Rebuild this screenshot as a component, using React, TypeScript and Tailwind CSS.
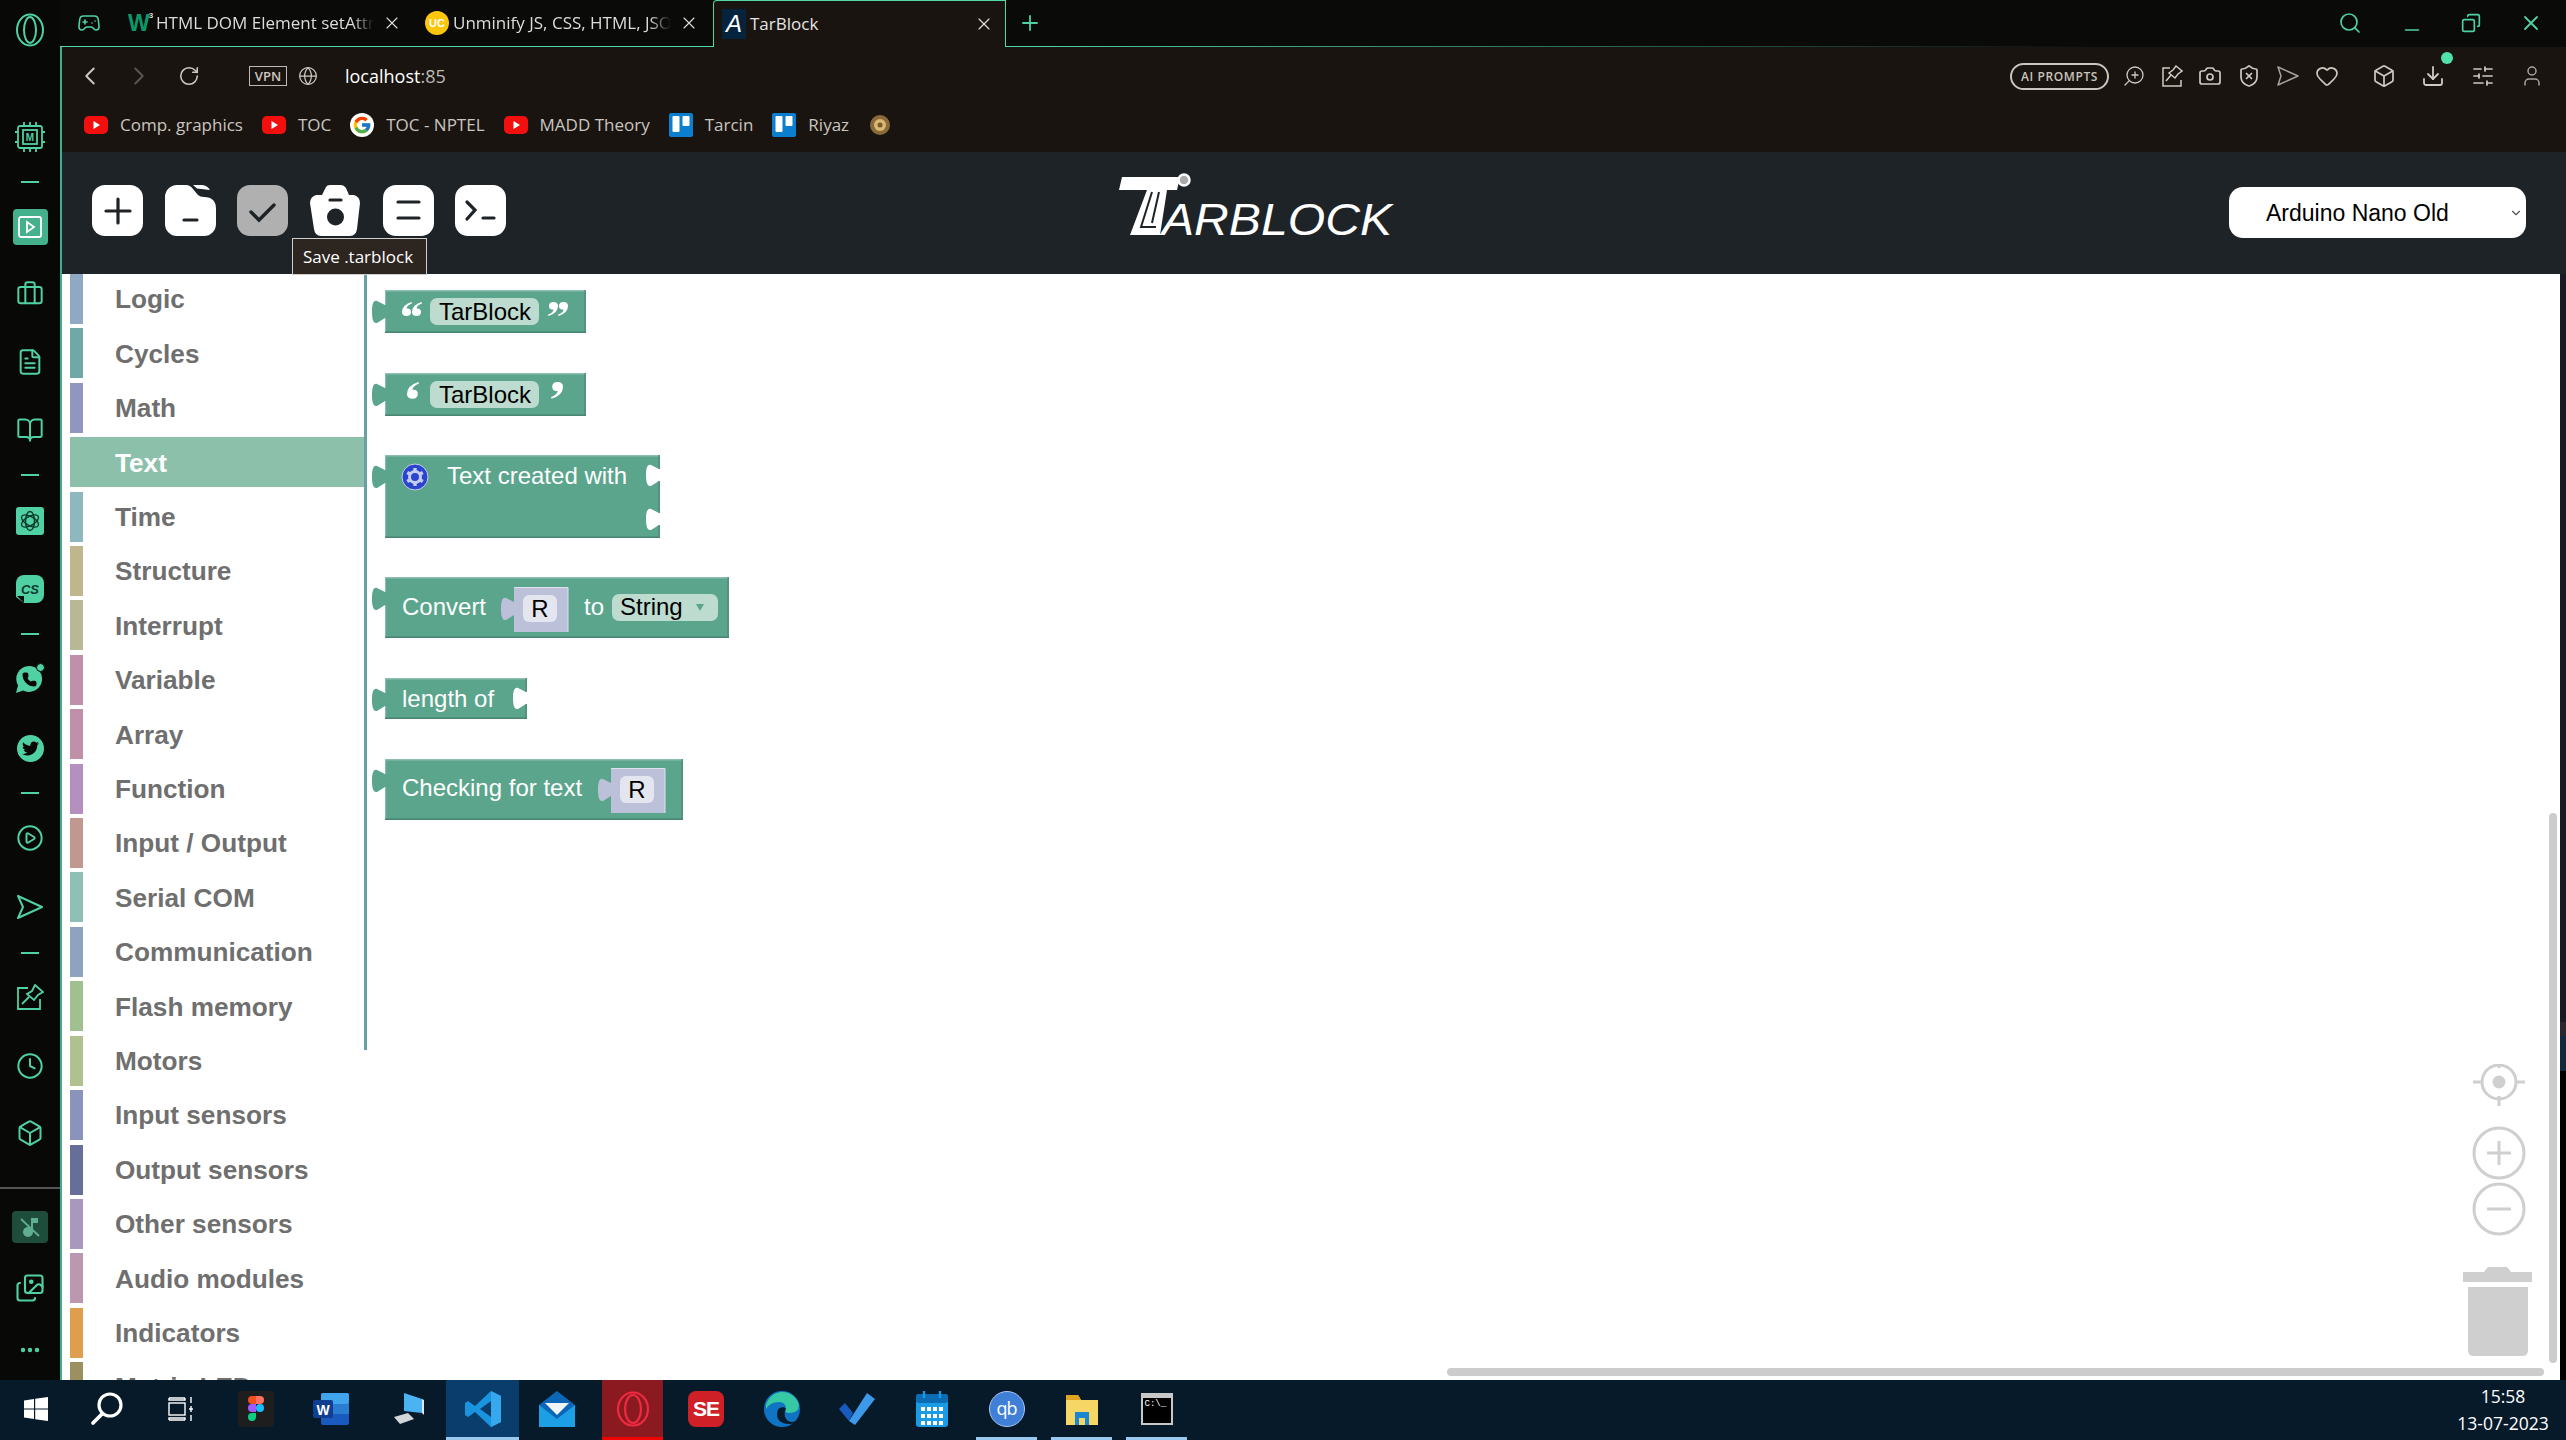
import React from "react";
import {
  Gamepad2, X, Plus, ChevronLeft, ChevronRight, RotateCw, Globe, Search, Copy, Minus,
  Camera, ShieldX, Heart, Box, Download, SlidersHorizontal, User, ZoomIn, Briefcase,
  FileText, BookOpen, CirclePlay, Clock, Images, Ellipsis, ChevronDown, Phone,
} from "lucide-react";
import { FaTwitter } from "react-icons/fa";
import { FcGoogle } from "react-icons/fc";

const categories: [string, string][] = [
  ["Logic", "#8fa8c4"], ["Cycles", "#70a8a8"], ["Math", "#8f97c0"], ["Text", "#8cc0ab"],
  ["Time", "#8eb8c0"], ["Structure", "#bfb68c"], ["Interrupt", "#b8b894"], ["Variable", "#c08fa8"],
  ["Array", "#c08fa8"], ["Function", "#b48fc0"], ["Input / Output", "#c09890"], ["Serial COM", "#8fc0b5"],
  ["Communication", "#8fa3c0"], ["Flash memory", "#a0c08f"], ["Motors", "#b0c08f"], ["Input sensors", "#8a93bb"],
  ["Output sensors", "#656f99"], ["Other sensors", "#a898bd"], ["Audio modules", "#bb98b0"], ["Indicators", "#df9e4d"],
  ["Matrix LED", "#9c9060"],
];

function Yt() {
  return (
    <svg width="24" height="18" viewBox="0 0 24 18" className="shrink-0">
      <rect width="24" height="18" rx="5" fill="#f40f0f" />
      <path d="M9.5 5 L16 9 L9.5 13 Z" fill="#fff" />
    </svg>
  );
}
function Trello() {
  return (
    <svg width="24" height="24" viewBox="0 0 24 24" className="shrink-0">
      <rect width="24" height="24" rx="2" fill="#0a7fd0" />
      <rect x="3.5" y="3" width="7" height="16" rx="1" fill="#fff" />
      <rect x="13.5" y="3" width="7" height="10" rx="1" fill="#fff" />
    </svg>
  );
}
function Mark({ label, children }: { label: string; children: React.ReactNode }) {
  return (
    <div className="flex items-center gap-[12px] mr-[19px]">
      {children}
      <span className="text-[17px] text-[#c9c5c0] whitespace-nowrap">{label}</span>
    </div>
  );
}

function Tab({ icon, label, w }: { icon: React.ReactNode; label: string; w: string }) {
  return (
    <div className={`flex items-center shrink-0 ${w}`}>
      <div className="w-[28px] shrink-0 flex justify-start">{icon}</div>
      <span className="w-[218px] overflow-hidden whitespace-nowrap text-[17px] text-[#dcdcdc] [mask-image:linear-gradient(to_right,black_90%,transparent)]">
        {label}
      </span>
      <X size={20} strokeWidth={1.4} className="ml-[8px] text-[#d8d8d8] shrink-0" />
    </div>
  );
}

function Rail({ children, className = "" }: { children: React.ReactNode; className?: string }) {
  return <div className={`h-[36px] w-full flex items-center justify-center shrink-0 ${className}`}>{children}</div>;
}
function Dash() {
  return <div className="w-[18px] h-[2px] bg-[#4fd1a3]" />;
}

function Sidebar() {
  const s = 28;
  const w = 1.7;
  return (
    <aside className="w-[60px] shrink-0 bg-[#080807] flex flex-col pt-[12px] text-[#4fd1a3]">
      <Rail>
        <svg width="30" height="34" viewBox="0 0 30 34" fill="none" stroke="#4fd1a3" strokeWidth="2">
          <ellipse cx="15" cy="17" rx="13" ry="15.5" />
          <ellipse cx="15" cy="17" rx="6" ry="13" />
        </svg>
      </Rail>
      <Rail className="mt-[71px]">
        <svg width="30" height="32" viewBox="0 0 30 32" fill="none" stroke="#4fd1a3" strokeWidth="1.8">
          <rect x="3" y="5" width="24" height="22" rx="2" />
          <rect x="8" y="9" width="14" height="14" />
          <path d="M9 5V1M15 5V1M21 5V1M9 27v4M15 27v4M21 27v4M3 11H0M3 21H0M27 11h3M27 21h3" />
          <text x="15" y="20" textAnchor="middle" fontSize="10" fontWeight="700" fill="#4fd1a3" stroke="none" fontFamily="Liberation Sans, sans-serif">M</text>
        </svg>
      </Rail>
      <Rail className="mt-[9px]"><Dash /></Rail>
      <Rail className="mt-[9px]">
        <div className="w-[35px] h-[36px] rounded-[4px] bg-[#45b08c] flex items-center justify-center">
          <svg width="26" height="24" viewBox="0 0 26 24" fill="none" stroke="#fff" strokeWidth="1.8">
            <rect x="2" y="2" width="22" height="20" rx="2" />
            <path d="M10 7 L17 12 L10 17 Z" />
          </svg>
        </div>
      </Rail>
      <Rail className="mt-[31px]"><Briefcase size={s} strokeWidth={w} /></Rail>
      <Rail className="mt-[32px]"><FileText size={s} strokeWidth={w} /></Rail>
      <Rail className="mt-[32px]"><BookOpen size={s} strokeWidth={w} /></Rail>
      <Rail className="mt-[9px]"><Dash /></Rail>
      <Rail className="mt-[10px]">
        <div className="w-[28px] h-[28px] rounded-[3px] bg-[#4fd1a3] flex items-center justify-center">
          <svg width="22" height="22" viewBox="0 0 22 22" fill="none" stroke="#0b3a2c" strokeWidth="1.4">
            <ellipse cx="11" cy="11" rx="4.5" ry="9.5" />
            <ellipse cx="11" cy="11" rx="4.5" ry="9.5" transform="rotate(60 11 11)" />
            <ellipse cx="11" cy="11" rx="4.5" ry="9.5" transform="rotate(120 11 11)" />
          </svg>
        </div>
      </Rail>
      <Rail className="mt-[32px]">
        <svg width="28" height="28" viewBox="0 0 28 28">
          <path d="M8 0H20a8 8 0 0 1 8 8V20a8 8 0 0 1-8 8H8L0 22V8a8 8 0 0 1 8-8Z" fill="#4fd1a3" />
          <path d="M1 21 L8 21 L8 28 Z" fill="#080807" />
          <text x="14" y="19" textAnchor="middle" fontSize="13" fontWeight="700" fontStyle="italic" fill="#0b3a2c" fontFamily="Liberation Sans, sans-serif">CS</text>
        </svg>
      </Rail>
      <Rail className="mt-[9px]"><Dash /></Rail>
      <Rail className="mt-[9px]">
        <div className="relative w-[30px] h-[30px]">
          <svg width="28" height="30" viewBox="0 0 28 30">
            <path d="M14 2A13 13 0 1 1 8 26.5L1 29L3 21.5A13 13 0 0 1 14 2Z" fill="#4fd1a3" />
          </svg>
          <Phone size={15} strokeWidth={2.4} className="absolute left-[7px] top-[8px] text-[#080807] fill-[#080807]" />
          <span className="absolute right-0 -top-[1px] w-[9px] h-[9px] rounded-full bg-[#4fd1a3] border border-[#080807]" />
        </div>
      </Rail>
      <Rail className="mt-[33px]">
        <div className="w-[27px] h-[27px] rounded-full bg-[#4fd1a3] flex items-center justify-center text-[#080807]">
          <FaTwitter size={17} />
        </div>
      </Rail>
      <Rail className="mt-[9px]"><Dash /></Rail>
      <Rail className="mt-[9px]"><CirclePlay size={s} strokeWidth={w} /></Rail>
      <Rail className="mt-[33px]">
        <svg width="28" height="26" viewBox="0 0 28 26" fill="none" stroke="#4fd1a3" strokeWidth="2" strokeLinejoin="round">
          <path d="M2 2 L26 13 L2 24 L7 13 Z" />
        </svg>
      </Rail>
      <Rail className="mt-[10px]"><Dash /></Rail>
      <Rail className="mt-[8px]">
        <svg width="28" height="26" viewBox="0 0 28 26" fill="none" stroke="#4fd1a3" strokeWidth="1.8">
          <path d="M12 4H2V25H24V15" />
          <path d="M19 1 L27 8 L22 11 L18 16 L11 10 L16 7 Z M13 13 L6 20" />
        </svg>
      </Rail>
      <Rail className="mt-[33px]"><Clock size={s} strokeWidth={w} /></Rail>
      <Rail className="mt-[31px]"><Box size={s} strokeWidth={w} /></Rail>
      <div className="mt-[36px] h-[2px] w-full bg-[#555] shrink-0" />
      <Rail className="mt-[20px]">
        <div className="w-[36px] h-[32px] rounded-[4px] bg-[#1f4d3c] flex items-center justify-center">
          <svg width="22" height="22" viewBox="0 0 22 22" fill="#5fae92">
            <circle cx="9" cy="16" r="5" />
            <path d="M12 2H19V7H14V16H12Z" />
            <path d="M2 3L20 20" stroke="#5fae92" strokeWidth="1.8" />
          </svg>
        </div>
      </Rail>
      <Rail className="mt-[25px]"><Images size={30} strokeWidth={w} /></Rail>
      <Rail className="mt-[26px]"><Ellipsis size={24} strokeWidth={2.4} /></Rail>
    </aside>
  );
}

function TabStrip() {
  return (
    <div className="h-[47px] flex shrink-0 bg-[#0a0a08]">
      <div className="w-[653px] shrink-0 border-b border-[#4fd8a8] flex items-center">
        <Gamepad2 size={24} strokeWidth={1.6} className="ml-[17px] mr-[27px] text-[#4fd1a3]" />
        <Tab
          w="w-[297px]"
          label="HTML DOM Element setAttribute"
          icon={
            <span className="flex items-start font-bold leading-none font-['Liberation_Sans']">
              <span className="text-[23px] text-[#0a9a6a] tracking-[-1px]">W</span>
              <span className="text-[8px] text-[#ddd]">3</span>
            </span>
          }
        />
        <Tab
          w="w-[274px]"
          label="Unminify JS, CSS, HTML, JSON"
          icon={
            <span className="w-[24px] h-[24px] rounded-full bg-[#fcc60c] flex items-center justify-center text-[11px] font-bold text-white font-['Liberation_Sans']">
              UC
            </span>
          }
        />
      </div>
      <div className="w-[293px] shrink-0 bg-[#19140f] border border-b-0 border-[#4fd8a8] flex items-center pl-[8px] rounded-tl-[4px]">
        <span className="w-[24px] h-[30px] bg-[#04233d] text-white italic text-[24px] leading-[30px] text-center font-['Liberation_Sans'] mr-[4px]">A</span>
        <span className="text-[17px] text-[#e5e5e5]">TarBlock</span>
        <X size={20} strokeWidth={1.4} className="ml-auto mr-[11px] text-[#e0e0e0]" />
      </div>
      <div className="flex-1 flex flex-col min-w-0">
        <div className="flex-1 flex items-center text-[#4fd1a3] pr-[23px]">
          <Plus size={24} strokeWidth={1.8} className="ml-[12px]" />
          <Search size={24} strokeWidth={1.7} className="ml-auto mr-[39px]" />
          <Minus size={22} strokeWidth={1.8} className="mr-[38px] mt-[14px]" />
          <Copy size={20} strokeWidth={2} className="mr-[38px] -scale-x-100" />
          <X size={24} strokeWidth={1.8} />
        </div>
        <div className="h-px bg-linear-to-r from-[#4fd8a8] to-transparent to-70%" />
      </div>
    </div>
  );
}

function AddressBar() {
  const gc = "text-[#cfc9c2]";
  return (
    <div className="h-[105px] shrink-0 bg-[#19140f] flex flex-col">
      <div className="h-[58px] flex items-center text-[#cfc9c2]">
        <ChevronLeft size={30} strokeWidth={1.5} className="ml-[13px]" />
        <ChevronRight size={30} strokeWidth={1.5} className="ml-[19px] text-[#5b5651]" />
        <RotateCw size={22} strokeWidth={1.7} className="ml-[24px]" />
        <span className="ml-[49px] w-[38px] h-[20px] border border-[#bbb] text-[13px] leading-[18px] text-center font-semibold">VPN</span>
        <Globe size={20} strokeWidth={1.5} className="ml-[11px]" />
        <span className="ml-[27px] text-[18px] text-white">
          localhost<span className="text-[#bdbab6]">:85</span>
        </span>
        <div className="ml-auto flex items-center mr-[22px]">
          <span className="w-[99px] h-[27px] rounded-full border-2 border-[#c9c4bd] text-[12px] font-semibold tracking-[0.6px] leading-[23px] text-center text-[#c9c4bd] mr-[13px]">
            AI PROMPTS
          </span>
          <ZoomIn size={24} strokeWidth={1.3} className={`${gc} -scale-x-100`} />
          <svg width="22" height="22" viewBox="0 0 22 22" fill="none" stroke="#cfc9c2" strokeWidth="1.5" className="ml-[15px]">
            <path d="M9 3H2V21H20V15" />
            <path d="M15 1 L21 6 L17 9 L14 13 L8 8 L12 5 Z M10 10 L5 16" />
          </svg>
          <Camera size={24} strokeWidth={1.7} className={`${gc} ml-[15px]`} />
          <ShieldX size={24} strokeWidth={1.7} className={`${gc} ml-[15px]`} />
          <svg width="22" height="20" viewBox="0 0 22 20" fill="none" stroke="#a8a39d" strokeWidth="1.5" strokeLinejoin="round" className="ml-[16px]">
            <path d="M1 1 L21 10 L1 19 L4 10 Z" />
          </svg>
          <Heart size={24} strokeWidth={1.7} className={`${gc} ml-[16px]`} />
          <Box size={24} strokeWidth={1.7} className={`${gc} ml-[33px]`} />
          <div className="relative ml-[25px]">
            <Download size={24} strokeWidth={1.8} className={gc} />
            <span className="absolute -top-[12px] -right-[8px] w-[12px] h-[12px] rounded-full bg-[#4fe0ac]" />
          </div>
          <SlidersHorizontal size={24} strokeWidth={1.7} className={`${gc} ml-[26px]`} />
          <User size={24} strokeWidth={1.5} className="text-[#a8a39d] ml-[25px]" />
        </div>
      </div>
      <div className="h-[40px] flex items-center pl-[22px]">
        <Mark label="Comp. graphics"><Yt /></Mark>
        <Mark label="TOC"><Yt /></Mark>
        <Mark label="TOC - NPTEL">
          <span className="w-[24px] h-[24px] rounded-full bg-white flex items-center justify-center shrink-0">
            <FcGoogle size={20} />
          </span>
        </Mark>
        <Mark label="MADD Theory"><Yt /></Mark>
        <Mark label="Tarcin"><Trello /></Mark>
        <Mark label="Riyaz"><Trello /></Mark>
        <svg width="24" height="24" viewBox="0 0 24 24">
          <circle cx="12" cy="12" r="10" fill="#8a6a3a" />
          <circle cx="12" cy="12" r="6" fill="#d9b873" />
          <circle cx="12" cy="12" r="2.5" fill="#7b5a2c" />
        </svg>
      </div>
    </div>
  );
}

function ToolBtn({ children }: { children: React.ReactNode }) {
  return <div className="w-[51px] h-[51px] shrink-0">{children}</div>;
}

function Toolbar() {
  const d = "#1e2327";
  const r = { stroke: d, strokeWidth: 3.2, strokeLinecap: "round" as const, fill: "none" };
  return (
    <div className="h-[122px] shrink-0 bg-[#1e2327] flex items-start pt-[33px] pl-[30px] relative">
      <div className="flex gap-[21.7px]">
        <ToolBtn>
          <svg viewBox="0 0 51 51"><rect width="51" height="51" rx="13" fill="#fff" /><path d="M26 14V38M14 26H38" {...r} /></svg>
        </ToolBtn>
        <ToolBtn>
          <svg viewBox="0 0 51 51">
            <path d="M0 12A12 12 0 0 1 12 0H21Q25 0 28 4L33 10Q35 12 39 12Q51 12 51 24V39A12 12 0 0 1 39 51H12A12 12 0 0 1 0 39Z" fill="#fff" />
            <path d="M28 0H36Q42 0 45 5L32 3.5Z" fill="#fff" />
            <path d="M19 35H32" {...r} />
          </svg>
        </ToolBtn>
        <ToolBtn>
          <svg viewBox="0 0 51 51"><rect width="51" height="51" rx="13" fill="#b0b0b0" /><path d="M14 27L22 35L37 20" {...r} strokeWidth={3.4} /></svg>
        </ToolBtn>
        <ToolBtn>
          <svg viewBox="0 0 51 51">
            <path d="M16 2Q17 0 20 0H31Q34 0 36 3L39 10H44Q50 12 50 18L47 44Q46 51 40 51H11Q5 51 4 44L0 18Q0 12 6 10H12Z" fill="#fff" />
            <path d="M20 15H31" {...r} />
            <circle cx="25.5" cy="32" r="8.5" fill={d} />
          </svg>
        </ToolBtn>
        <ToolBtn>
          <svg viewBox="0 0 51 51"><rect width="51" height="51" rx="13" fill="#fff" /><path d="M15 17H36M15 33H36" {...r} /></svg>
        </ToolBtn>
        <ToolBtn>
          <svg viewBox="0 0 51 51"><rect width="51" height="51" rx="13" fill="#fff" /><path d="M12 17L20 25L12 34M28 33H39" {...r} /></svg>
        </ToolBtn>
      </div>
      <div className="absolute left-[230px] top-[86px] z-20 w-[135px] h-[37px] bg-[#2d2520] border border-[#cfcfcf] text-white text-[17px] leading-[35px] text-center pr-[3px] whitespace-nowrap">
        Save .tarblock
      </div>
      <svg width="290" height="70" viewBox="0 0 290 70" className="ml-[613px] -mt-[9px] shrink-0 overflow-visible">
        <path d="M3 1H61L58 14H48L41 59H11L28 14H0Z" fill="#fff" />
        <path d="M33 16L22 51H37M40 16L33 47" stroke="#1e2327" strokeWidth="2" fill="none" />
        <path d="M58 4H62" stroke="#fff" strokeWidth="3" />
        <circle cx="65" cy="4" r="5.5" fill="#aaa" stroke="#fff" strokeWidth="2.5" />
        <text x="43" y="59" fontFamily="Liberation Sans, sans-serif" fontStyle="italic" fontSize="45" fill="#fff" textLength="230" lengthAdjust="spacingAndGlyphs">ARBLOCK</text>
      </svg>
      <div className="absolute left-[2167px] top-[35px] w-[297px] h-[51px] bg-white rounded-[14px] flex items-center pl-[37px] pt-[1px] font-['Liberation_Sans'] text-[23px] text-black">
        Arduino Nano Old
        <ChevronDown size={14} strokeWidth={2} className="absolute right-[3px] top-[19px] text-[#555]" />
      </div>
    </div>
  );
}

const F = "#5ba58c", HI = "#8cc0ab", LO = "#498470";
const FONT = "Liberation Sans, Arial, sans-serif";

function tabLeft(x: number, t: number) {
  return `L${x} ${t + 28} L${x - 8} ${t + 33} C${x - 12} ${t + 34} ${x - 13} ${t + 28} ${x - 13} ${t + 22} C${x - 13} ${t + 15} ${x - 12} ${t + 10} ${x - 8} ${t + 11} L${x} ${t + 15}`;
}
function notch(r: number, n: number) {
  return `V${n + 5} L${r - 8} ${n + 1} C${r - 12} ${n} ${r - 13} ${n + 5} ${r - 13} ${n + 11} C${r - 13} ${n + 17} ${r - 12} ${n + 23} ${r - 8} ${n + 22} L${r} ${n + 17}`;
}
function Block({ r, t, b, notches = [] }: { r: number; t: number; b: number; notches?: number[] }) {
  const x = 385;
  const d = `M${x} ${t} H${r} ${notches.map((n) => notch(r, n)).join(" ")} V${b} H${x} ${tabLeft(x, t)} Z`;
  const stops = [t, ...notches.flatMap((n) => [n + 5, n + 17]), b];
  const segs: [number, number][] = [];
  for (let i = 0; i < stops.length; i += 2) segs.push([stops[i], stops[i + 1]]);
  return (
    <g>
      <path d={d} fill={F} />
      <path d={`M${x} ${t + 0.8} H${r}`} stroke={HI} strokeWidth="1.6" />
      <path d={`M${x + 0.6} ${t} V${t + 15} M${x + 0.6} ${t + 28} V${b}`} stroke={HI} strokeWidth="1" />
      <path d={`M${x} ${b - 0.8} H${r + 1}`} stroke={LO} strokeWidth="1.6" />
      {segs.map(([a, c]) => (
        <path key={a} d={`M${r + 0.2} ${a} V${c}`} stroke={LO} strokeWidth="1.4" />
      ))}
    </g>
  );
}
function Field({ x, y, w, h, fill = "#bedbd0" }: { x: number; y: number; w: number; h: number; fill?: string }) {
  return <rect x={x} y={y} width={w} height={h} rx="7" fill={fill} />;
}
function Txt({ x, y, fill = "#fff", children }: { x: number; y: number; fill?: string; children: string }) {
  return <text x={x} y={y} fill={fill} fontFamily={FONT} fontSize="24">{children}</text>;
}
function Value({ x, t }: { x: number; t: number }) {
  const b = t + 45;
  return (
    <g>
      <path d={`M${x} ${t} H${x + 54} V${b} H${x} ${tabLeft(x, t)} Z`} fill="#bcc1d9" />
      <path d={`M${x} ${t + 0.5} H${x + 54} V${b}`} fill="none" stroke="#dfe1ee" strokeWidth="1" />
      <rect x={x + 9} y={t + 8} width="34" height="27" rx="6" fill="#e4e6ef" />
      <text x={x + 26} y={t + 30} textAnchor="middle" fontFamily={FONT} fontSize="24" fill="#000">R</text>
    </g>
  );
}
function Quote({ x, y, flip, k = 1 }: { x: number; y: number; flip?: boolean; k?: number }) {
  return (
    <path
      transform={`translate(${x} ${y}) scale(${k}) ${flip ? "rotate(180 5 7)" : ""}`}
      d="M9.5 0 Q0 3 0 10 Q0 14 4.5 14 Q9 14 9 10 Q9 6 4.5 6.5 Q5 3 10 1.5 Z"
      fill="#fff"
    />
  );
}

function Blocks() {
  return (
    <svg width="400" height="560" viewBox="368 274 400 560" className="absolute left-[306px] top-0 z-10">
      <Block r={585} t={290} b={333} />
      <Quote x={402} y={302} /><Quote x={412} y={302} />
      <Field x={430} y={298} w={109} h={27} />
      <Txt x={439} y={320} fill="#000">TarBlock</Txt>
      <Quote x={548} y={302} flip /><Quote x={558} y={302} flip />

      <Block r={585} t={373} b={416} />
      <Quote x={407} y={382} k={1.2} />
      <Field x={430} y={381} w={109} h={27} />
      <Txt x={439} y={403} fill="#000">TarBlock</Txt>
      <Quote x={551} y={382} flip k={1.2} />

      <Block r={659} t={455} b={538} notches={[464, 508]} />
      <circle cx="415" cy="477" r="13" fill="#2a44d0" stroke="#c5cfe0" strokeWidth="1" />
      <g stroke="#c3cdf2" strokeWidth="3.4">
        {[0, 60, 120].map((a) => (
          <path key={a} d="M415 468 V486" transform={`rotate(${a} 415 477)`} />
        ))}
      </g>
      <circle cx="415" cy="477" r="5.5" fill="#2a44d0" stroke="#c3cdf2" strokeWidth="3" />
      <Txt x={447} y={484}>Text created with</Txt>

      <Block r={728} t={577} b={638} />
      <Txt x={402} y={615}>Convert</Txt>
      <Value x={514} t={587} />
      <Txt x={584} y={615}>to</Txt>
      <Field x={612} y={594} w={106} h={27} />
      <Txt x={620} y={615} fill="#000">String</Txt>
      <path d="M696 604 H704 L700 611 Z" fill={F} />

      <Block r={526} t={678} b={719} notches={[687]} />
      <Txt x={402} y={707}>length of</Txt>

      <Block r={682} t={759} b={820} />
      <Txt x={402} y={796}>Checking for text</Txt>
      <Value x={611} t={768} />
    </svg>
  );
}

function WsControls() {
  const c = "#cfcfcf";
  return (
    <svg width="110" height="300" viewBox="2450 1064 110 300" className="absolute left-[2388px] top-[790px]">
      <g fill="none" stroke={c} strokeWidth="3">
        <circle cx="2499" cy="1082" r="17" />
        <path d="M2499 1058V1068M2499 1096V1106M2473 1082H2483M2515 1082H2525" />
        <circle cx="2499" cy="1153" r="25" />
        <path d="M2487 1153H2511M2499 1141V1165" />
        <circle cx="2499" cy="1209" r="25" />
        <path d="M2487 1209H2511" />
      </g>
      <circle cx="2499" cy="1082" r="6.5" fill={c} />
      <path d="M2463 1272H2484L2488 1267H2507L2511 1272H2532V1282H2463Z" fill={c} />
      <path d="M2468 1287H2528V1350Q2528 1356 2522 1356H2474Q2468 1356 2468 1350Z" fill={c} />
    </svg>
  );
}

function Page() {
  return (
    <div className="flex-1 min-h-0 flex relative">
      <div className="flex-1 relative bg-white overflow-hidden">
        <div className="flex h-full">
          <div className="w-[8px] shrink-0" />
          <ul className="w-[294px] shrink-0 font-['Liberation_Sans'] font-bold text-[26.2px] text-[#6f6f6f] overflow-hidden">
            {categories.map(([name, color]) => {
              const on = name === "Text";
              return (
                <li key={name} className={`h-[50px] mb-[4.42px] flex items-center ${on ? "bg-[#8cc0ab] text-white" : ""}`}>
                  <span className="w-[13px] h-full shrink-0" style={{ background: color }} />
                  <span className="ml-[32px] mt-[2px] whitespace-nowrap">{name}</span>
                </li>
              );
            })}
          </ul>
          <div className="w-[3px] h-[776px] bg-[#66a0a0] shrink-0" />
        </div>
        <Blocks />
        <WsControls />
        <div className="absolute right-[3px] top-[539px] w-[8px] h-[550px] rounded-[4px] bg-[#cccccc]" />
        <div className="absolute left-[1385px] right-[16px] top-[1094px] h-[8px] rounded-[4px] bg-[#cccccc]" />
      </div>
      <div className="w-[6px] shrink-0 flex flex-col">
        <div className="h-[748px] bg-[#1a1a25]" />
        <div className="h-[14px] bg-[#2a2630]" />
        <div className="h-[35px] bg-[#14283c]" />
        <div className="flex-1 bg-black" />
      </div>
    </div>
  );
}

function Cell({ w, under, bg, children }: { w: string; under?: string; bg?: string; children: React.ReactNode }) {
  return (
    <div className={`${w} h-[60px] shrink-0 flex flex-col ${bg ?? ""}`}>
      <div className="flex-1 flex items-center justify-center">{children}</div>
      <div className={`h-[3px] ${under ?? ""}`} />
    </div>
  );
}

function Taskbar() {
  return (
    <div className="h-[60px] shrink-0 bg-[#071a2a] flex items-stretch">
      <Cell w="w-[72px]">
        <svg width="24" height="24" viewBox="0 0 24 24" fill="#fff">
          <path d="M0 3.4L10 2V11.4H0ZM11.2 1.8L24 0V11.4H11.2ZM0 12.6H10V22L0 20.6ZM11.2 12.6H24V24L11.2 22.2Z" />
        </svg>
      </Cell>
      <Cell w="w-[72px]">
        <svg width="36" height="34" viewBox="0 0 36 34" fill="none" stroke="#fff" strokeWidth="3.2">
          <circle cx="20" cy="13" r="11" />
          <path d="M12 22L3 31" strokeLinecap="round" strokeWidth="3.8" />
        </svg>
      </Cell>
      <Cell w="w-[74px]">
        <svg width="26" height="26" viewBox="0 0 26 26" fill="none" stroke="#fff" strokeWidth="1.4">
          <path d="M1 2H17M1 24H17M1 2V4H17V2M1 24V22H17V24" />
          <rect x="1" y="7" width="16" height="12" />
          <path d="M23 1V7M23 19V25M23 10V16M21 13H25" />
        </svg>
      </Cell>
      <Cell w="w-[75px]">
        <div className="w-[36px] h-[36px] rounded-[4px] bg-[#1e1e1e] flex items-center justify-center">
          <svg width="16" height="26" viewBox="0 0 16 26">
            <path d="M0 4a4 4 0 0 1 4-4h4v8H4a4 4 0 0 1-4-4Z" fill="#f24e1e" />
            <path d="M8 0h4a4 4 0 0 1 0 8H8Z" fill="#ff7262" />
            <path d="M0 12a4 4 0 0 1 4-4h4v8H4a4 4 0 0 1-4-4Z" fill="#a259ff" />
            <circle cx="12" cy="12" r="4" fill="#1abcfe" />
            <path d="M0 21a4 4 0 0 1 4-4h4v4a4 4 0 0 1-8 0Z" fill="#0acf83" />
          </svg>
        </div>
      </Cell>
      <Cell w="w-[75px]">
        <svg width="36" height="32" viewBox="0 0 36 32">
          <rect x="8" y="0" width="28" height="32" rx="2" fill="#185abd" />
          <rect x="8" y="0" width="28" height="11" rx="2" fill="#41a5ee" />
          <rect x="8" y="11" width="28" height="10" fill="#2b7cd3" />
          <rect x="0" y="7" width="20" height="18" rx="2" fill="#103f91" />
          <text x="10" y="22" textAnchor="middle" fontSize="14" fontWeight="700" fill="#fff" fontFamily="Liberation Sans, sans-serif">W</text>
        </svg>
      </Cell>
      <Cell w="w-[78px]">
        <svg width="34" height="32" viewBox="0 0 34 32">
          <path d="M14 0L32 6V20L14 18Z" fill="#4cb3f2" />
          <path d="M32 6L34 7V22L32 20Z" fill="#dfe6ea" />
          <path d="M4 24L18 20L24 26L10 31Z" fill="#d3d7da" />
        </svg>
      </Cell>
      <Cell w="w-[73px]" bg="bg-[#0a3d6b]" under="bg-[#9ac8ee]">
        <svg width="36" height="36" viewBox="0 0 36 36">
          <path d="M26 0L36 5V31L26 36L10 21L3 26L0 24V12L3 10L10 15Z M26 10L15 18L26 26Z" fill="#1b94e0" fillRule="evenodd" />
          <path d="M26 0L36 5V31L26 36Z M26 10L26 26" fill="#36a8ee" />
        </svg>
      </Cell>
      <Cell w="w-[76px]">
        <svg width="36" height="36" viewBox="0 0 36 36">
          <path d="M18 0L36 14V36H0V14Z" fill="#0a67b8" />
          <path d="M6 12H30L18 24Z" fill="#eef4f8" />
          <path d="M0 14L18 28L36 14V36H0Z" fill="#1d9fe6" />
        </svg>
      </Cell>
      <div className="w-[7px] shrink-0" />
      <Cell w="w-[61px]" bg="bg-[#8b1a20]" under="bg-[#f30000]">
        <svg width="34" height="36" viewBox="0 0 34 36" fill="none" stroke="#ee2a42" strokeWidth="2.2">
          <ellipse cx="17" cy="18" rx="15" ry="16.5" />
          <ellipse cx="17" cy="18" rx="8" ry="14" />
        </svg>
      </Cell>
      <Cell w="w-[86px]">
        <div className="w-[36px] h-[36px] rounded-[8px] bg-[#cf2027] flex items-center justify-center text-white font-bold text-[21px] font-['Liberation_Sans'] tracking-[-1px]">SE</div>
      </Cell>
      <Cell w="w-[66px]">
        <svg width="36" height="36" viewBox="0 0 36 36">
          <circle cx="18" cy="18" r="18" fill="#0f74c4" />
          <path d="M2 14A17 17 0 0 1 35 14Q35 22 25 22Q20 22 22 18Q22 11 15 11Q6 11 2 18Z" fill="#36c9a4" />
          <path d="M20 16Q13 16 13 23Q13 33 26 33Q30 33 32 30Q24 33 21 26Q20 20 22 18Z" fill="#071a2a" />
        </svg>
      </Cell>
      <Cell w="w-[84px]">
        <svg width="36" height="32" viewBox="0 0 36 32">
          <path d="M0 16L6 10L14 20L10 28Z" fill="#185abd" />
          <path d="M10 28L28 0L36 6L16 32Z" fill="#3d9ae8" />
        </svg>
      </Cell>
      <Cell w="w-[66px]">
        <svg width="32" height="36" viewBox="0 0 32 36">
          <rect y="3" width="32" height="33" rx="3" fill="#1a9be6" />
          <rect y="3" width="32" height="9" rx="3" fill="#0b6cb3" />
          <path d="M8 0V7M24 0V7" stroke="#1a9be6" strokeWidth="2.4" />
          {[10, 17, 24].map((y) =>
            [5, 11, 17, 23].map((x) => <rect key={`${x}-${y + 6}`} x={x} y={y + 6} width="4" height="4" fill="#fff" />)
          )}
        </svg>
      </Cell>
      <div className="w-[11px] shrink-0" />
      <Cell w="w-[61px]" under="bg-[#9ac8ee]">
        <div className="w-[36px] h-[36px] rounded-full bg-[#3f7fd8] border border-[#a9c8f0] flex items-center justify-center text-white text-[18px] tracking-[-1px]">qb</div>
      </Cell>
      <div className="w-[14px] shrink-0" />
      <Cell w="w-[61px]" under="bg-[#9ac8ee]">
        <svg width="32" height="32" viewBox="0 0 32 32">
          <path d="M0 2H12L15 7H32V32H0Z" fill="#f6d664" />
          <path d="M0 2H12L15 7H0Z" fill="#e0a520" />
          <rect x="9" y="19" width="14" height="13" fill="#1a86d0" />
          <rect x="13" y="25" width="6" height="7" fill="#f6d664" />
        </svg>
      </Cell>
      <div className="w-[14px] shrink-0" />
      <Cell w="w-[61px]" under="bg-[#9ac8ee]">
        <div className="w-[32px] h-[32px] bg-black border-2 border-[#c8c8c8] border-t-[5px] text-[9px] leading-[12px] text-white pl-[2px] font-['Liberation_Mono']">C:\_</div>
      </Cell>
      <div className="ml-auto w-[96px] mr-[15px] flex flex-col items-center text-white text-[17.5px] leading-[27px] pt-[3px]">
        <span>15:58</span>
        <span>13-07-2023</span>
      </div>
    </div>
  );
}

export default function App() {
  return (
    <div className="w-[2566px] h-[1440px] overflow-hidden flex flex-col font-['Open_Sans',sans-serif]">
      <div className="flex-1 min-h-0 flex">
        <Sidebar />
        <div className="flex-1 min-w-0 flex flex-col">
          <TabStrip />
          <div className="flex-1 min-h-0 flex flex-col border-l-2 border-[#3fae8a]">
            <AddressBar />
            <Toolbar />
            <Page />
          </div>
        </div>
      </div>
      <Taskbar />
    </div>
  );
}
